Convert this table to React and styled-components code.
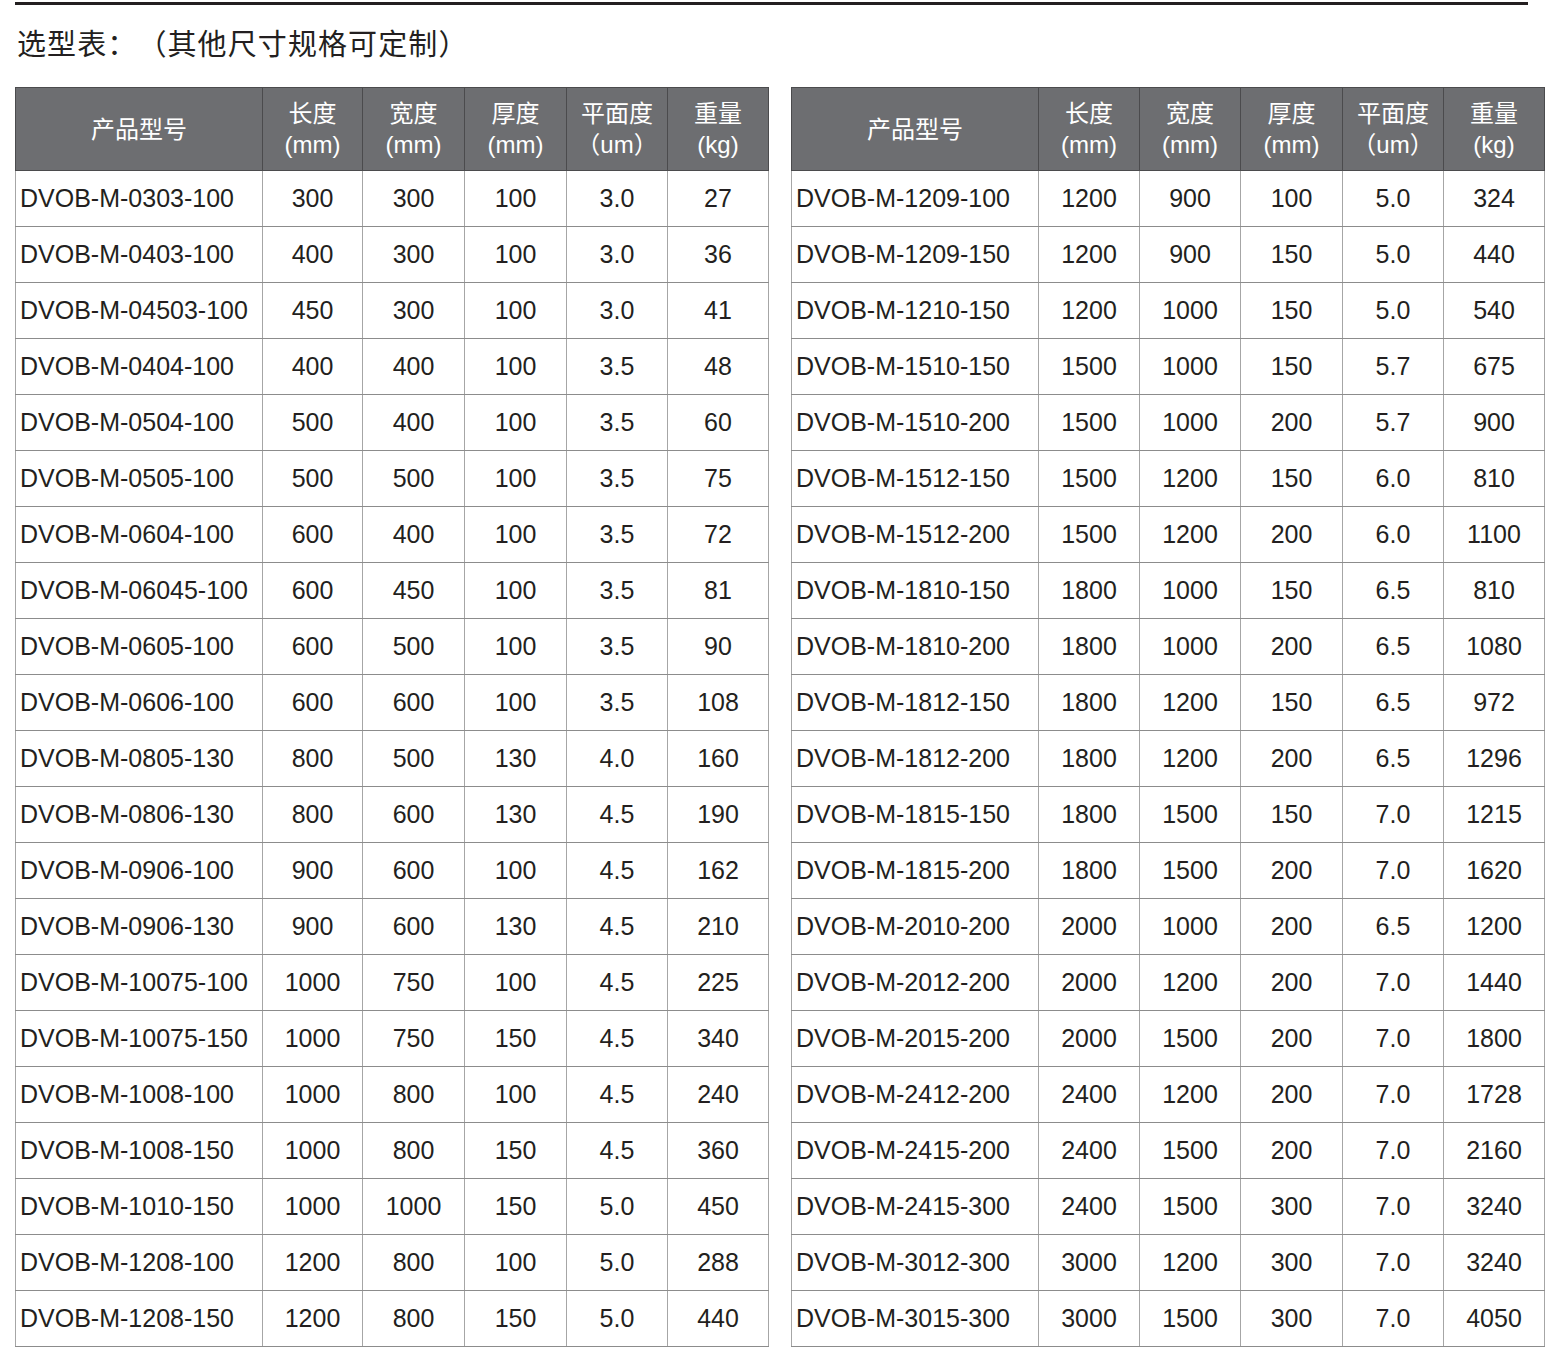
import React from 'react';
import styled, { createGlobalStyle } from 'styled-components';

const GlobalStyle = createGlobalStyle`
  html, body {
    margin: 0;
    padding: 0;
    background: #fff;
  }
  body {
    font-family: "Liberation Sans", "Noto Sans CJK SC", sans-serif;
    color: #231f20;
  }
`;

const Page = styled.div`
  width: 1559px;
  height: 1359px;
  padding: 2px 0 0 15px;
  box-sizing: border-box;
`;

const Rule = styled.div`
  width: 1513px;
  height: 3px;
  background: #231f20;
`;

const Title = styled.h2`
  margin: 0;
  height: 82px;
  line-height: 80px;
  padding-left: 2px;
  font-size: 29px;
  font-weight: normal;
  color: #231f20;
  letter-spacing: 1.1px;
  text-spacing-trim: space-all;
`;

const Tables = styled.div`
  display: flex;
  gap: 22px;
  align-items: flex-start;
`;

const Table = styled.table`
  width: 754px;
  table-layout: fixed;
  border-collapse: collapse;
  border: 1px solid #777;
`;

const HeadRow = styled.tr`
  background: #6d6e71;
`;

const TH = styled.th`
  height: 82px;
  padding: 0;
  border: 1px solid #4b4b4d;
  color: #fff;
  font-weight: normal;
  font-size: 24px;
  line-height: 31px;
  text-align: center;
  vertical-align: middle;
  text-spacing-trim: space-all;
`;

const TD = styled.td`
  height: 55px;
  padding: ${p => (p.$name ? '0 0 0 4px' : '0')};
  border-top: 1px solid #8c8c8c;
  border-bottom: 1px solid #8c8c8c;
  border-left: 1px solid #a6a6a6;
  border-right: 1px solid #a6a6a6;
  font-size: 25px;
  text-align: ${p => (p.$name ? 'left' : 'center')};
  vertical-align: middle;
  white-space: nowrap;
  color: #231f20;
`;

const leftRows = [
  ['0303-100', 300, 300, 100, '3.0', 27],
  ['0403-100', 400, 300, 100, '3.0', 36],
  ['04503-100', 450, 300, 100, '3.0', 41],
  ['0404-100', 400, 400, 100, '3.5', 48],
  ['0504-100', 500, 400, 100, '3.5', 60],
  ['0505-100', 500, 500, 100, '3.5', 75],
  ['0604-100', 600, 400, 100, '3.5', 72],
  ['06045-100', 600, 450, 100, '3.5', 81],
  ['0605-100', 600, 500, 100, '3.5', 90],
  ['0606-100', 600, 600, 100, '3.5', 108],
  ['0805-130', 800, 500, 130, '4.0', 160],
  ['0806-130', 800, 600, 130, '4.5', 190],
  ['0906-100', 900, 600, 100, '4.5', 162],
  ['0906-130', 900, 600, 130, '4.5', 210],
  ['10075-100', 1000, 750, 100, '4.5', 225],
  ['10075-150', 1000, 750, 150, '4.5', 340],
  ['1008-100', 1000, 800, 100, '4.5', 240],
  ['1008-150', 1000, 800, 150, '4.5', 360],
  ['1010-150', 1000, 1000, 150, '5.0', 450],
  ['1208-100', 1200, 800, 100, '5.0', 288],
  ['1208-150', 1200, 800, 150, '5.0', 440],
];

const rightRows = [
  ['1209-100', 1200, 900, 100, '5.0', 324],
  ['1209-150', 1200, 900, 150, '5.0', 440],
  ['1210-150', 1200, 1000, 150, '5.0', 540],
  ['1510-150', 1500, 1000, 150, '5.7', 675],
  ['1510-200', 1500, 1000, 200, '5.7', 900],
  ['1512-150', 1500, 1200, 150, '6.0', 810],
  ['1512-200', 1500, 1200, 200, '6.0', 1100],
  ['1810-150', 1800, 1000, 150, '6.5', 810],
  ['1810-200', 1800, 1000, 200, '6.5', 1080],
  ['1812-150', 1800, 1200, 150, '6.5', 972],
  ['1812-200', 1800, 1200, 200, '6.5', 1296],
  ['1815-150', 1800, 1500, 150, '7.0', 1215],
  ['1815-200', 1800, 1500, 200, '7.0', 1620],
  ['2010-200', 2000, 1000, 200, '6.5', 1200],
  ['2012-200', 2000, 1200, 200, '7.0', 1440],
  ['2015-200', 2000, 1500, 200, '7.0', 1800],
  ['2412-200', 2400, 1200, 200, '7.0', 1728],
  ['2415-200', 2400, 1500, 200, '7.0', 2160],
  ['2415-300', 2400, 1500, 300, '7.0', 3240],
  ['3012-300', 3000, 1200, 300, '7.0', 3240],
  ['3015-300', 3000, 1500, 300, '7.0', 4050],
];

const SpecTable = ({ rows, widths }) => (
  <Table>
    <colgroup>
      {widths.map((w, i) => <col key={i} style={{ width: w }} />)}
    </colgroup>
    <thead>
      <HeadRow>
        <TH>产品型号</TH>
        <TH>长度<br />(mm)</TH>
        <TH>宽度<br />(mm)</TH>
        <TH>厚度<br />(mm)</TH>
        <TH>平面度<br />（um）</TH>
        <TH>重量<br />(kg)</TH>
      </HeadRow>
    </thead>
    <tbody>
      {rows.map(([code, ...vals]) => (
        <tr key={code}>
          <TD $name>DVOB-M-{code}</TD>
          {vals.map((v, i) => <TD key={i}>{v}</TD>)}
        </tr>
      ))}
    </tbody>
  </Table>
);

export default function App() {
  return (
    <Page>
      <GlobalStyle />
      <Rule />
      <Title>选型表：（其他尺寸规格可定制）</Title>
      <Tables>
        <SpecTable rows={leftRows} widths={[247, 100, 102, 102, 101, 101]} />
        <SpecTable rows={rightRows} widths={[247, 101, 101, 102, 101, 101]} />
      </Tables>
    </Page>
  );
}
